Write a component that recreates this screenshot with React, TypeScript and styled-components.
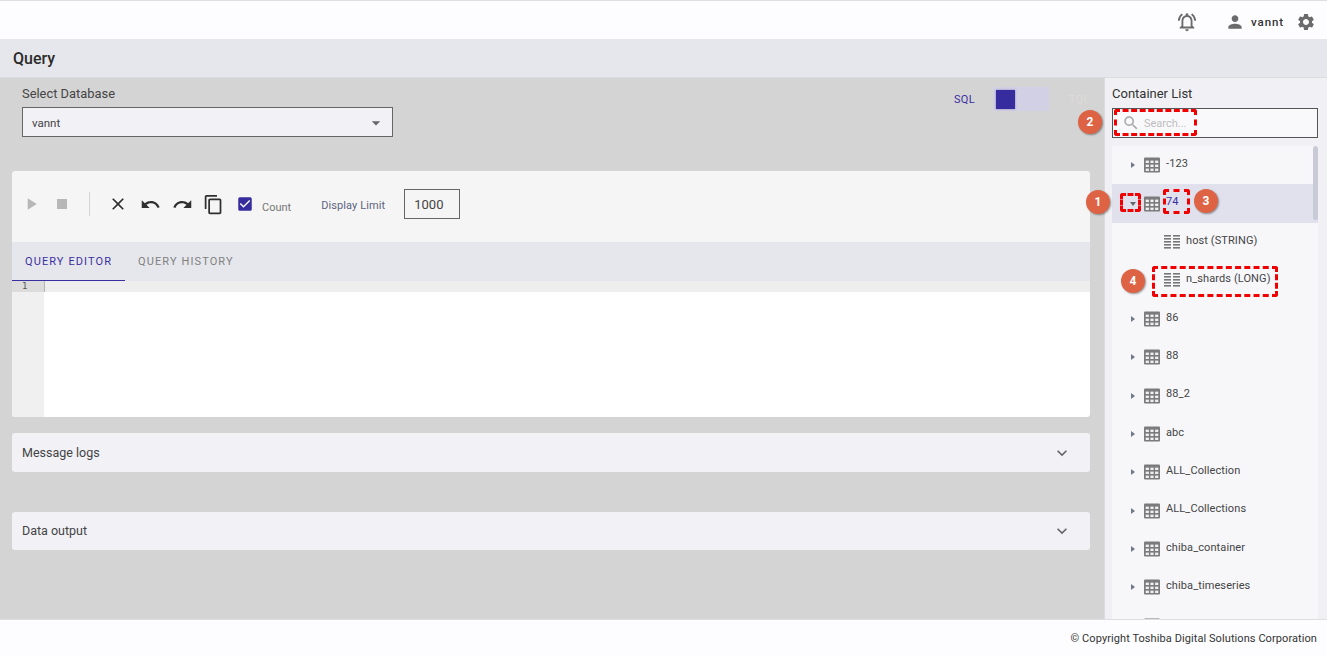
import React from "react";
import styled, { createGlobalStyle } from "styled-components";
import {
  MdArrowDropDown,
  MdCheckBox,
  MdClose,
  MdContentCopy,
  MdExpandMore,
  MdOutlineNotificationsActive,
  MdPerson,
  MdPlayArrow,
  MdRedo,
  MdSearch,
  MdSettings,
  MdStop,
  MdUndo,
} from "react-icons/md";

const Global = createGlobalStyle`
  html, body { margin: 0; padding: 0; }
  body { font-family: Roboto, "Liberation Sans", sans-serif; color: #444; overflow: hidden; }
  * { box-sizing: border-box; }
`;

const Page = styled.div`
  position: relative;
  width: 1327px;
  height: 656px;
  display: flex;
  flex-direction: column;
  overflow: hidden;
`;

const Header = styled.header`
  height: 39px;
  flex: none;
  background: #fdfdff;
  border-top: 1px solid #dedede;
  display: flex;
  align-items: center;
  justify-content: flex-end;
  padding: 3px 11px 0 0;
  color: #6b6b6b;
`;

const BellSlot = styled.span`
  display: flex;
  margin-right: 27px;
`;

const UserName = styled.span`
  font-size: 11.5px;
  font-weight: 500;
  letter-spacing: 0.9px;
  color: #333;
  margin: 0 12px 0 6px;
`;

const TitleBar = styled.div`
  height: 39px;
  flex: none;
  background: #e6e7ec;
  display: flex;
  align-items: center;
  padding-left: 13px;
  border-bottom: 1px solid #dcdcdc;
`;

const Title = styled.h1`
  margin: 0;
  font-size: 16px;
  font-weight: 500;
  color: #2b2b2b;
`;

const Main = styled.div`
  flex: 1;
  display: flex;
  min-height: 0;
`;

const Workspace = styled.main`
  width: 1104px;
  flex: none;
  background: #d4d4d4;
  padding: 7px 14px 0 12px;
`;

const TopRow = styled.div`
  display: flex;
  justify-content: space-between;
  height: 86px;
  padding-left: 10px;
`;

const FieldLabel = styled.div`
  font-size: 12.9px;
  line-height: 16px;
  padding-top: 1px;
  height: 16px;
  color: #444;
`;

const SelectBox = styled.div`
  width: 371px;
  height: 30px;
  margin-top: 6px;
  background: #f1f1f6;
  border: 1px solid #666;
  display: flex;
  align-items: center;
  justify-content: space-between;
  padding: 1px 6px 0 9px;
  font-size: 11.5px;
  color: #444;
`;

const ModeToggle = styled.div`
  display: flex;
  align-items: center;
  height: 24px;
  margin-top: 2px;
  font-size: 11px;
`;

const ModeLabel = styled.span<{ $on?: boolean }>`
  color: ${(p) => (p.$on ? "#3a2fa0" : "#dcdcdc")};
  width: 21px;
  padding-top: 1px;
  letter-spacing: 0.3px;
`;

const Track = styled.div`
  width: 56px;
  height: 24px;
  background: #d2d0e4;
  margin: 0 20px 0 18px;
  padding: 3px;
`;

const Knob = styled.div`
  width: 19px;
  height: 19px;
  background: #372c9e;
  box-shadow: 0 0 2px rgba(55, 44, 158, 0.5);
`;

const EditorCard = styled.section`
  border-radius: 3px;
  overflow: hidden;
  height: 246px;
  display: flex;
  flex-direction: column;
`;

const Toolbar = styled.div`
  height: 71px;
  flex: none;
  background: #f5f5f5;
  display: flex;
  align-items: center;
  padding: 0 0 5px 9px;
`;

const ToolButton = styled.span<{ $dim?: boolean; $w?: number }>`
  width: ${(p) => p.$w ?? 32}px;
  display: flex;
  justify-content: center;
  color: ${(p) => (p.$dim ? "#b7b7b7" : "#2f2f2f")};
`;

const Divider = styled.span`
  width: 1px;
  height: 24px;
  background: #d4d4d4;
  margin: 0 12px 0 7px;
`;

const CheckLabel = styled.span`
  font-size: 11px;
  color: #777;
  margin: 6px 0 0 1px;
`;

const LimitLabel = styled.span`
  font-size: 11px;
  letter-spacing: 0.1px;
  color: #5c6480;
  margin: 2px 19px 0 30px;
`;

const LimitInput = styled.div`
  width: 56px;
  height: 30px;
  border: 1px solid #666;
  font-size: 13px;
  color: #444;
  display: flex;
  align-items: center;
  padding-left: 9px;
`;

const TabBar = styled.div`
  height: 39px;
  flex: none;
  background: #e6e7ec;
  display: flex;
`;

const Tab = styled.div<{ $active?: boolean }>`
  padding: 0 13px;
  display: flex;
  align-items: center;
  font-size: 11px;
  letter-spacing: 1.1px;
  color: ${(p) => (p.$active ? "#3a2fa0" : "#808080")};
  border-bottom: 1px solid ${(p) => (p.$active ? "#3a2fa0" : "transparent")};
`;

const Editor = styled.div`
  flex: 1;
  display: flex;
  background: #fff;
`;

const Gutter = styled.div`
  width: 32px;
  background: #f0f0f0;
`;

const LineNumber = styled.div`
  height: 11px;
  background: #dcdcdc;
  font-family: "DejaVu Sans Mono", monospace;
  font-size: 9px;
  line-height: 11px;
  color: #555;
  padding-left: 10px;
`;

const CodeArea = styled.div`
  flex: 1;
`;

const ActiveLine = styled.div`
  height: 11px;
  background: #eeeeee;
  border-left: 1px solid #b5b5b5;
  margin-left: 0;
`;

const Accordion = styled.div<{ $h: number; $mt: number; $pb?: number }>`
  height: ${(p) => p.$h}px;
  margin-top: ${(p) => p.$mt}px;
  background: #f1f1f6;
  border-radius: 3px;
  display: flex;
  align-items: center;
  justify-content: space-between;
  padding: 0 18px ${(p) => p.$pb ?? 0}px 10px;
  font-size: 12.5px;
  color: #444;
`;

const Side = styled.aside`
  flex: 1;
  background: #f1f1f5;
  border-left: 1px solid #dcdcdc;
  padding: 8px 9px 0 7px;
  display: flex;
  flex-direction: column;
  min-height: 0;
`;

const SideTitle = styled.div`
  font-size: 13px;
  line-height: 16px;
  color: #333;
`;

const SearchBox = styled.div`
  height: 30px;
  margin-top: 6px;
  flex: none;
  background: #f9f9fc;
  border: 1px solid #555;
  display: flex;
  align-items: center;
  gap: 4px;
  padding-left: 9px;
  font-size: 11px;
  color: #bdbdbd;
`;

const TreeList = styled.div`
  position: relative;
  margin-top: 8px;
  flex: 1;
  min-height: 0;
  overflow: hidden;
  background: #f7f7fa;
`;

const Scrollbar = styled.div`
  position: absolute;
  top: 0;
  right: 0;
  width: 5px;
  height: 74px;
  border-radius: 3px;
  background: #c8cad6;
`;

const Row = styled.div<{ $selected?: boolean; $child?: boolean }>`
  height: 38.4px;
  display: flex;
  align-items: center;
  padding-left: ${(p) => (p.$child ? 52 : 16)}px;
  background: ${(p) => (p.$selected ? "#e1e1ee" : "transparent")};
`;

const RowLabel = styled.span<{ $selected?: boolean }>`
  font-size: 11px;
  letter-spacing: 0.1px;
  margin: -3.5px 0 0 6px;
  color: ${(p) => (p.$selected ? "#3a2fa0" : "#444")};
`;

const Caret = styled.span<{ $open?: boolean }>`
  width: 0;
  height: 0;
  margin-left: ${(p) => (p.$open ? 2 : 3)}px;
  margin-right: ${(p) => (p.$open ? 8 : 9)}px;
  border-style: solid;
  ${(p) =>
    p.$open
      ? "border-width: 4px 3.5px 0 3.5px; border-color: #666 transparent transparent transparent;"
      : "border-width: 3.5px 0 3.5px 4px; border-color: transparent transparent transparent #6f7a86;"}
`;

const Footer = styled.footer`
  height: 37px;
  flex: none;
  background: #fdfdff;
  border-top: 1px solid #dedede;
  display: flex;
  align-items: center;
  justify-content: flex-end;
  padding: 1px 10px 0 0;
  font-size: 11px;
  letter-spacing: 0.08px;
  color: #333;
`;

const DashedMark = styled.div<{ $x: number; $y: number; $w: number; $h: number }>`
  position: absolute;
  left: ${(p) => p.$x}px;
  top: ${(p) => p.$y}px;
  width: ${(p) => p.$w}px;
  height: ${(p) => p.$h}px;
  border: 3px dashed #f00000;
  border-radius: 3px;
`;

const Badge = styled.div<{ $x: number; $y: number }>`
  position: absolute;
  left: ${(p) => p.$x - 12}px;
  top: ${(p) => p.$y - 12}px;
  width: 24px;
  height: 24px;
  border-radius: 50%;
  background: #dd6344;
  box-shadow: 1px 1px 2px rgba(0, 0, 0, 0.4);
  color: #fff;
  font-size: 12px;
  font-weight: 700;
  display: flex;
  align-items: center;
  justify-content: center;
`;

const TableIcon = () => (
  <svg width="16" height="16" viewBox="0 0 16 16">
    <rect width="16" height="15" y="0.5" rx="1" fill="#7b7b7b" />
    <g fill="#eeeef3">
      {[3.6, 7.6, 11.6].map((y) =>
        [1.7, 6.4, 11.1].map((x) => (
          <rect key={`${x}-${y}`} x={x} y={y} width="3.2" height="2.4" />
        ))
      )}
    </g>
  </svg>
);

const ColumnIcon = () => (
  <svg width="16" height="16" viewBox="0 0 16 16">
    <g fill="#777">
      {[1, 4, 7, 10, 13].map((y) => (
        <React.Fragment key={y}>
          <rect x="0" y={y} width="7" height="1.6" />
          <rect x="9" y={y} width="7" height="1.6" />
        </React.Fragment>
      ))}
    </g>
  </svg>
);

const tree = [
  { name: "-123" },
  { name: "74", open: true },
  { name: "host (STRING)", child: true },
  { name: "n_shards (LONG)", child: true },
  { name: "86" },
  { name: "88" },
  { name: "88_2" },
  { name: "abc" },
  { name: "ALL_Collection" },
  { name: "ALL_Collections" },
  { name: "chiba_container" },
  { name: "chiba_timeseries" },
  { name: "" },
];

export default function App() {
  return (
    <Page>
      <Global />
      <Header>
        <BellSlot>
          <MdOutlineNotificationsActive size={22} />
        </BellSlot>
        <MdPerson size={20} />
        <UserName>vannt</UserName>
        <MdSettings size={20} />
      </Header>
      <TitleBar>
        <Title>Query</Title>
      </TitleBar>
      <Main>
        <Workspace>
          <TopRow>
            <div>
              <FieldLabel>Select Database</FieldLabel>
              <SelectBox>
                vannt
                <MdArrowDropDown size={20} color="#666" />
              </SelectBox>
            </div>
            <ModeToggle>
              <ModeLabel $on>SQL</ModeLabel>
              <Track>
                <Knob />
              </Track>
              <ModeLabel>TQL</ModeLabel>
            </ModeToggle>
          </TopRow>
          <EditorCard>
            <Toolbar>
              <ToolButton $dim $w={20}>
                <MdPlayArrow size={20} />
              </ToolButton>
              <ToolButton $dim $w={41}>
                <MdStop size={20} />
              </ToolButton>
              <Divider />
              <ToolButton $w={32}>
                <MdClose size={20} />
              </ToolButton>
              <ToolButton $w={32}>
                <MdUndo size={21} />
              </ToolButton>
              <ToolButton $w={32}>
                <MdRedo size={21} />
              </ToolButton>
              <ToolButton $w={31}>
                <MdContentCopy size={21} />
              </ToolButton>
              <ToolButton $w={32}>
                <MdCheckBox size={18} color="#372c9e" />
              </ToolButton>
              <CheckLabel>Count</CheckLabel>
              <LimitLabel>Display Limit</LimitLabel>
              <LimitInput>1000</LimitInput>
            </Toolbar>
            <TabBar>
              <Tab $active>QUERY EDITOR</Tab>
              <Tab>QUERY HISTORY</Tab>
            </TabBar>
            <Editor>
              <Gutter>
                <LineNumber>1</LineNumber>
              </Gutter>
              <CodeArea>
                <ActiveLine />
              </CodeArea>
            </Editor>
          </EditorCard>
          <Accordion $h={39} $mt={16}>
            Message logs
            <MdExpandMore size={20} color="#666" />
          </Accordion>
          <Accordion $h={38} $mt={40} $pb={1}>
            Data output
            <MdExpandMore size={20} color="#666" />
          </Accordion>
        </Workspace>
        <Side>
          <SideTitle>Container List</SideTitle>
          <SearchBox>
            <MdSearch size={18} color="#a5a5a5" />
            Search...
          </SearchBox>
          <TreeList>
            <Scrollbar />
            {tree.map((r) => (
              <Row key={r.name} $selected={r.open} $child={r.child}>
                {!r.child && <Caret $open={r.open} />}
                {r.child ? <ColumnIcon /> : <TableIcon />}
                <RowLabel $selected={r.open}>{r.name}</RowLabel>
              </Row>
            ))}
          </TreeList>
        </Side>
      </Main>
      <Footer>© Copyright Toshiba Digital Solutions Corporation</Footer>
      <DashedMark $x={1114} $y={109} $w={83} $h={27} />
      <DashedMark $x={1120} $y={193} $w={21} $h={19} />
      <DashedMark $x={1163} $y={189} $w={27} $h={25} />
      <DashedMark $x={1152} $y={266} $w={126} $h={31} />
      <Badge $x={1098} $y={202}>1</Badge>
      <Badge $x={1090} $y={122}>2</Badge>
      <Badge $x={1206} $y={201}>3</Badge>
      <Badge $x={1133} $y={281}>4</Badge>
    </Page>
  );
}
